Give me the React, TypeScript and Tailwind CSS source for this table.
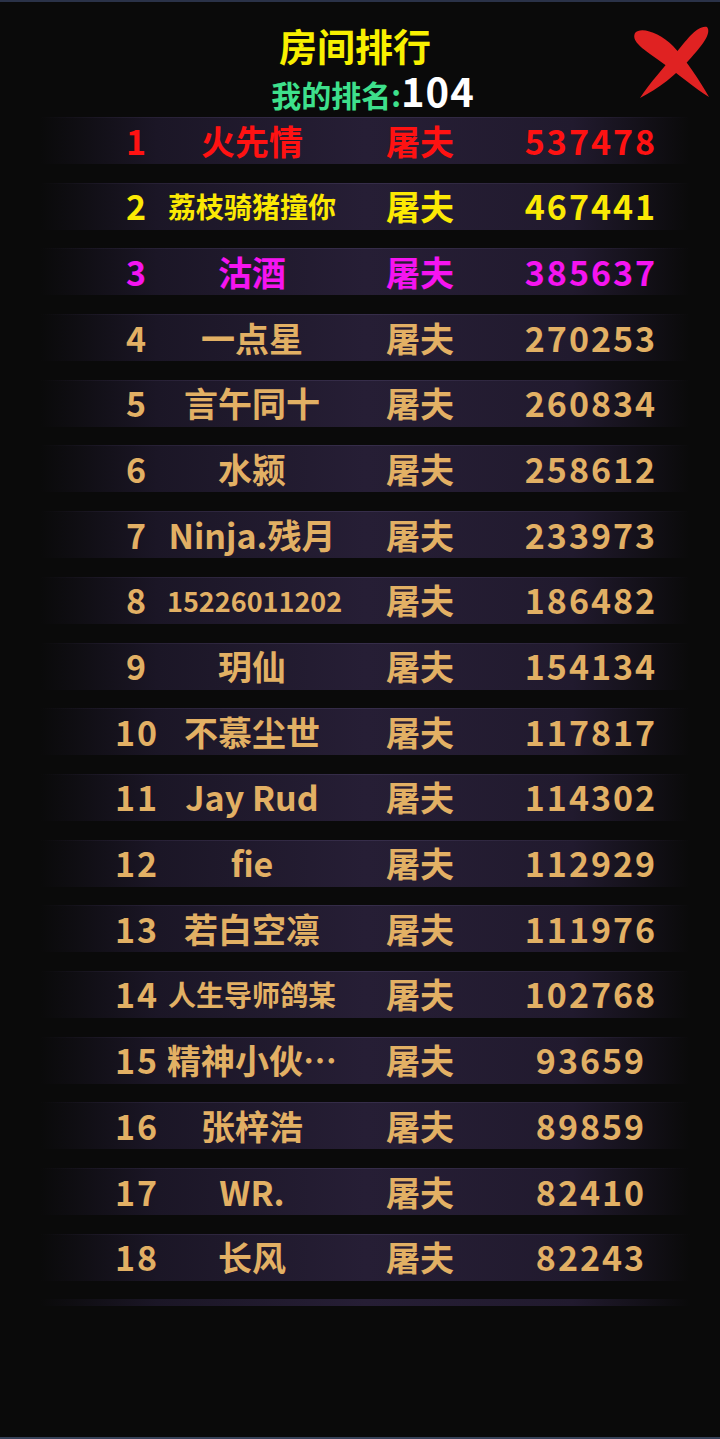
import React from 'react';

type Row = { rank: number; name: string; job: string; score: number; color: string; small?: string };

const GOLD = 'text-[#e2b064]';

const rows: Row[] = [
  { rank: 1, name: '火先情', job: '屠夫', score: 537478, color: 'text-[#ff1212]' },
  { rank: 2, name: '荔枝骑猪撞你', job: '屠夫', score: 467441, color: 'text-[#fbe904]', small: 'text-[28px]' },
  { rank: 3, name: '沽酒', job: '屠夫', score: 385637, color: 'text-[#f514f0]' },
  { rank: 4, name: '一点星', job: '屠夫', score: 270253, color: GOLD },
  { rank: 5, name: '言午同十', job: '屠夫', score: 260834, color: GOLD },
  { rank: 6, name: '水颍', job: '屠夫', score: 258612, color: GOLD },
  { rank: 7, name: 'Ninja.残月', job: '屠夫', score: 233973, color: GOLD },
  { rank: 8, name: '15226011202', job: '屠夫', score: 186482, color: GOLD, small: 'text-[27px]' },
  { rank: 9, name: '玥仙', job: '屠夫', score: 154134, color: GOLD },
  { rank: 10, name: '不慕尘世', job: '屠夫', score: 117817, color: GOLD },
  { rank: 11, name: 'Jay Rud', job: '屠夫', score: 114302, color: GOLD },
  { rank: 12, name: 'fie', job: '屠夫', score: 112929, color: GOLD },
  { rank: 13, name: '若白空凛', job: '屠夫', score: 111976, color: GOLD },
  { rank: 14, name: '人生导师鸽某', job: '屠夫', score: 102768, color: GOLD, small: 'text-[28px]' },
  { rank: 15, name: '精神小伙…', job: '屠夫', score: 93659, color: GOLD },
  { rank: 16, name: '张梓浩', job: '屠夫', score: 89859, color: GOLD },
  { rank: 17, name: 'WR.', job: '屠夫', score: 82410, color: GOLD },
  { rank: 18, name: '长风', job: '屠夫', score: 82243, color: GOLD },
];

const barClass =
  'bg-[linear-gradient(90deg,rgba(34,28,46,0)_0%,#1b1626_18%,#261e35_50%,#211a2e_82%,rgba(34,28,46,0)_100%)]';

function RankRow({ row }: { row: Row }) {
  return (
    <div className={`relative h-[47px] shrink-0 flex items-center ${barClass}`}>
      <div className="absolute inset-x-0 top-0 h-px bg-[linear-gradient(90deg,rgba(60,50,80,0)_0%,#2f2740_30%,#362d4a_50%,#2f2740_70%,rgba(60,50,80,0)_100%)]" />
      <div className={`flex items-center font-bold leading-none pl-[67px] ${row.color}`}>
        <div className="w-[60px] text-center text-[34px] tracking-[2px]">{row.rank}</div>
        <div className={`w-[170px] text-center whitespace-nowrap ${row.small ?? 'text-[34px]'}`}>{row.name}</div>
        <div className="w-[33px]" />
        <div className="w-[100px] text-center text-[34px]">{row.job}</div>
        <div className="w-[41px]" />
        <div className="w-[160px] text-center text-[34px] tracking-[2px]">{row.score}</div>
      </div>
    </div>
  );
}

function CloseX() {
  return (
    <svg viewBox="0 0 100 95" className="absolute left-[620px] top-[15px] w-[100px] h-[95px]">
      <path
        d="M15 18 C21 11 40 18 53 31 C66 45 80 66 89 82 C76 74 58 59 44 49 C30 38 10 28 15 18 Z"
        fill="#e02222"
      />
      <path
        d="M87 12 C92 18 82 31 69 45 C57 59 38 74 20 83 C30 68 44 52 56 38 C66 26 77 10 87 12 Z"
        fill="#e02222"
      />
    </svg>
  );
}

export default function App() {
  return (
    <div className="relative w-[720px] h-[1439px] bg-[#0a0a0a] overflow-hidden font-['Noto_Sans_CJK_SC','Noto_Sans',sans-serif]">
      <div className="h-[2px] bg-[#2a3248]" />
      <CloseX />
      <div className="flex flex-col items-center pt-[24px]">
        <div className="pr-[10px] text-[38px] font-bold leading-none text-[#f8f000]">房间排行</div>
        <div className="flex items-baseline pl-[26px] mt-[6px] font-bold leading-none">
          <span className="text-[30px] text-[#3ee08c]">我的排名:</span>
          <span className="text-[40px] tracking-[1px] text-white">104</span>
        </div>
      </div>
      <div className="absolute left-[40px] w-[650px] top-[117px] h-[1189px] overflow-hidden flex flex-col gap-[18.7px]">
        {rows.map((r) => (
          <RankRow key={r.rank} row={r} />
        ))}
        <div className={`h-[47px] shrink-0 ${barClass}`} />
      </div>
      <div className="absolute bottom-0 inset-x-0 h-[2px] bg-[#364259]" />
    </div>
  );
}
